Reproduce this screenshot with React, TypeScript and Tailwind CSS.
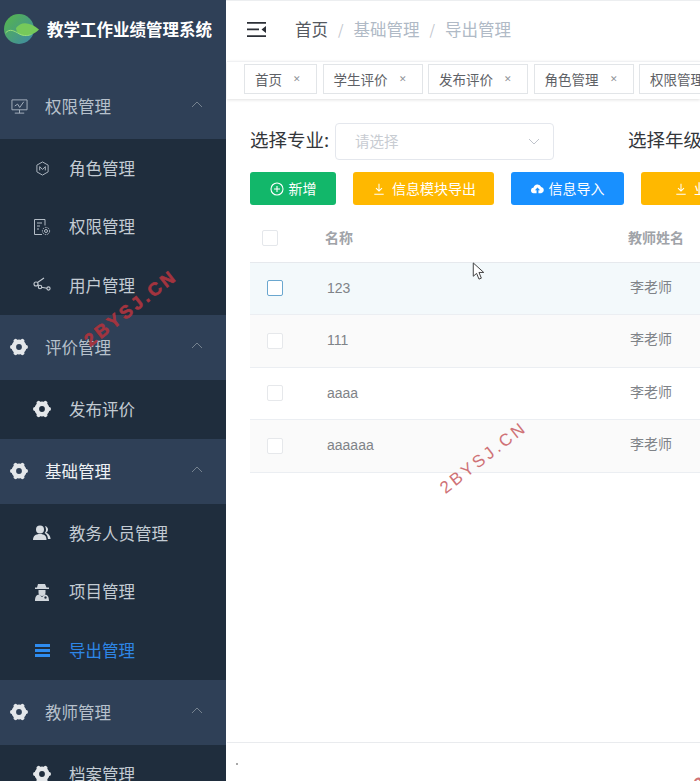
import React from "react";

const font = { fontFamily: '"Noto Sans CJK SC", "Liberation Sans", sans-serif' };

function Gear({ className = "" }: { className?: string }) {
  return (
    <svg viewBox="0 0 20 20" className={className} fill="none" stroke="#e4e7ea" aria-hidden="true">
      <circle cx="10" cy="10" r="5.200" strokeWidth="4.600" />
      <path
        strokeWidth="3.800"
        strokeLinecap="round"
        d="M15.500 10h1.600M12.750 14.800l.8 1.400M7.250 14.800l-.8 1.400M4.500 10H2.900M7.250 5.200l-.8-1.400M12.750 5.200l.8-1.400"
      />
    </svg>
  );
}

function Monitor() {
  return (
    <svg viewBox="0 0 18 18" className="w-[17px] h-[17px]" fill="none" stroke="#a9b4c0" strokeWidth="1">
      <path d="M1 2h16v10.500H1zM9 12.500V16M4 16h10" />
      <path d="M4 8.500l3-2 2.200 3.500L13.500 4" />
    </svg>
  );
}

function HexM() {
  return (
    <svg viewBox="0 0 16 16" className="w-[15px] h-[15px]" fill="none" stroke="#b3bcc6" strokeWidth="1">
      <path d="M8 1l6 3.400v7.200L8 15l-6-3.400V4.400z" />
      <path d="M5 10V6l3 3 3-3v4" />
    </svg>
  );
}

function DocGear() {
  return (
    <svg viewBox="0 0 18 18" className="w-[18px] h-[18px]" fill="none" stroke="#b3bcc6" strokeWidth="1">
      <path d="M9 16.500H1.500v-15h10.500v6" />
      <path d="M4 5h5M4 8h3M4 11h2" />
      <circle cx="13" cy="13" r="1.500" />
      <circle cx="13" cy="13" r="3.600" strokeDasharray="1.600 1" />
    </svg>
  );
}

function Share() {
  return (
    <svg viewBox="0 0 18 18" className="w-[18px] h-[18px]" fill="none" stroke="#c2c9d1" strokeWidth="1.100">
      <circle cx="3" cy="8" r="2" />
      <circle cx="7" cy="11" r="1.700" />
      <circle cx="15.500" cy="12.500" r="1.600" />
      <path d="M4.500 6.500L11 2M8.500 11.300l5.500 1M5 8.500l.8 1.200" />
    </svg>
  );
}

function Users() {
  return (
    <svg viewBox="0 0 18 16" className="w-[18px] h-[16px]" fill="#d8dde2">
      <circle cx="7" cy="4.500" r="4" />
      <path d="M0 15c0-4 2.500-6 7-6s6.500 2 6.500 6z" />
      <path d="M12 1c2 .6 3 2 3 3.600 0 1.400-.8 2.600-2 3.200 2.600.8 4.400 2.800 4.600 6.200H15c-.2-3-1.400-5-3.400-6 1-1 1.400-2 1.400-3.300 0-1.500-.4-2.700-1-3.700z" />
    </svg>
  );
}

function Detective() {
  return (
    <svg viewBox="0 0 14 18" className="w-[14px] h-[18px]" fill="#d0d6dc">
      <path d="M3 1h7l1.500 3.500H14V6H0V4.500h2z" />
      <path d="M3.500 7h7v2.500a3.500 3.500 0 0 1-7 0z" />
      <path d="M0 18c0-4.500 1.500-6 4-6.500L7 14l3-2.500c2.500.5 4 2 4 6.500z" />
      <circle cx="10.500" cy="14.500" r="1.500" fill="#1f2d3d" stroke="#d0d6dc" strokeWidth=".7" />
    </svg>
  );
}

function Bars() {
  return (
    <svg viewBox="0 0 15 13" className="w-[15px] h-[13px]" fill="#2e8cf0">
      <path d="M0 0h15v3H0zM0 5h15v3H0zM0 10h15v3H0z" />
    </svg>
  );
}

function Chevron() {
  return (
    <svg viewBox="0 0 12 7" className="w-[12px] h-[7px]" fill="none" stroke="#75828f" strokeWidth="1">
      <path d="M1 6l5-5 5 5" />
    </svg>
  );
}

function Parent({ icon, label, active }: { icon: React.ReactNode; label: string; active?: boolean }) {
  return (
    <div className="h-[65.500px] shrink-0 bg-[#2f4057] flex items-center pl-[10px] pr-[23px]">
      <div className="w-[18px] flex justify-center">{icon}</div>
      <span className={`ml-[17px] text-[16.500px] ${active ? "text-[#eef1f4]" : "text-[#b7c1cc]"}`}>{label}</span>
      <div className="ml-auto -mt-[3px]">
        <Chevron />
      </div>
    </div>
  );
}

function Sub({ icon, label, active }: { icon: React.ReactNode; label: string; active?: boolean }) {
  return (
    <div className="h-[58.500px] shrink-0 bg-[#1f2d3d] flex items-center pl-[33px]">
      <div className="w-[18px] flex justify-center">{icon}</div>
      <span className={`ml-[18px] text-[16.500px] ${active ? "text-[#2e86e6]" : "text-[#c3cbd3]"}`}>{label}</span>
    </div>
  );
}

function Logo() {
  return (
    <svg viewBox="0 0 36 32" className="w-[36px] h-[32px]" aria-hidden="true">
      <defs>
        <linearGradient id="lg" x1="0" y1="0" x2="1" y2="1">
          <stop offset="0" stopColor="#56b848" />
          <stop offset="1" stopColor="#3e88a8" />
        </linearGradient>
      </defs>
      <circle cx="15" cy="16" r="15" fill="url(#lg)" />
      <path d="M12 15c5-7 14-6 23 1.500C29 23 19 24 15 21c-2-1.500-3-4-3-6z" fill="#76c95a" />
      <path d="M1.500 20c4-5 9-2 14 1 5 2.500 9 1.500 12 .5" fill="none" stroke="#9adf7a" strokeWidth="1" />
    </svg>
  );
}

function Tag({ label, w }: { label: string; w: string }) {
  return (
    <div className={`${w} h-[30px] shrink-0 border border-[#e2e5e8] bg-white flex items-center pl-[10px] text-[13.500px] text-[#5e6166]`}>
      <span>{label}</span>
      <span className="ml-[11px] text-[9px] text-[#8f9398]">✕</span>
    </div>
  );
}

function Btn({ color, w, icon, label }: { color: string; w: string; icon: React.ReactNode; label: string }) {
  return (
    <div className={`${color} ${w} h-[33px] shrink-0 rounded-[3px] flex items-center justify-center gap-[5px] text-white text-[14px]`}>
      {icon}
      <span>{label}</span>
    </div>
  );
}

function Download() {
  return (
    <svg viewBox="0 0 14 14" className="w-[12px] h-[12px] mx-[2px]" fill="none" stroke="#fff" strokeWidth="1.200">
      <path d="M7 1v8M3.500 6L7 9.500 10.500 6M1.500 13h11" />
    </svg>
  );
}

function Plus() {
  return (
    <svg viewBox="0 0 14 14" className="w-[14px] h-[14px]" fill="none" stroke="#fff" strokeWidth="1.100">
      <circle cx="7" cy="7" r="6" />
      <path d="M7 4v6M4 7h6" />
    </svg>
  );
}

function Cloud() {
  return (
    <svg viewBox="0 0 14 11" className="w-[13px] h-[11px]" fill="#fff">
      <path d="M3.200 10.500a3 3 0 0 1-.4-6A4.300 4.300 0 0 1 11 3.800a3.400 3.400 0 0 1 0 6.700H8V7.500h1.800L7 4.500l-2.800 3H6v3z" />
    </svg>
  );
}

function Row({ name, bg, active, h }: { name: string; bg: string; active?: boolean; h: string }) {
  return (
    <div className={`${bg} ${h} flex items-center border-b border-[#ebeef2] text-[14px] text-[#7f8388]`}>
      <div className={`ml-[17px] w-[16px] h-[16px] rounded-[2px] bg-white border ${active ? "border-[#6aa7cf]" : "border-[#e6e8eb]"}`} />
      <div className="ml-[44px] w-[303px] [font-family:'Liberation_Sans',sans-serif]">{name}</div>
      <div className="-mt-[4px]">李老师</div>
    </div>
  );
}

function Mark({ className }: { className: string }) {
  return (
    <div className={`absolute whitespace-nowrap font-bold text-[17px] tracking-[3px] -rotate-[38deg] pointer-events-none [font-family:'Liberation_Sans',sans-serif] ${className}`}>
      2BYSJ.CN
    </div>
  );
}

export default function App() {
  return (
    <div className="relative w-[700px] h-[781px] overflow-hidden flex bg-white" style={font}>
      <aside className="w-[226px] shrink-0 flex flex-col overflow-hidden bg-[#2f4057]">
        <div className="h-[73.500px] shrink-0 flex items-start pt-[13px] pl-[4px]">
          <Logo />
          <span className="ml-[7px] mt-[5px] text-[16.500px] font-bold text-white whitespace-nowrap leading-[22px]">教学工作业绩管理系统</span>
        </div>
        <Parent icon={<Monitor />} label="权限管理" />
        <Sub icon={<HexM />} label="角色管理" />
        <Sub icon={<DocGear />} label="权限管理" />
        <Sub icon={<Share />} label="用户管理" />
        <Parent icon={<Gear className="w-[20px] h-[20px] shrink-0" />} label="评价管理" />
        <Sub icon={<Gear className="w-[20px] h-[20px] shrink-0" />} label="发布评价" />
        <Parent icon={<Gear className="w-[20px] h-[20px] shrink-0" />} label="基础管理" active />
        <Sub icon={<Users />} label="教务人员管理" />
        <Sub icon={<Detective />} label="项目管理" />
        <Sub icon={<Bars />} label="导出管理" active />
        <Parent icon={<Gear className="w-[20px] h-[20px] shrink-0" />} label="教师管理" />
        <Sub icon={<Gear className="w-[20px] h-[20px] shrink-0" />} label="档案管理" />
      </aside>

      <main className="flex-1 min-w-0 flex flex-col overflow-hidden border-t border-[#eceef0] pl-px">
        <div className="h-[60px] shrink-0 flex items-center pb-[4px]">
          <svg viewBox="0 0 19 15" className="ml-[20px] w-[19px] h-[15px]" fill="#2b2f36">
            <path d="M0 0h19v1.700H0zM0 6.500h12v1.700H0zM0 13.200h19v1.700H0zM19 4v7l-4.500-3.500z" />
          </svg>
          <div className="ml-[29px] flex items-center text-[16.500px] whitespace-nowrap">
            <span className="text-[#55595f]">首页</span>
            <span className="mx-[10px] text-[#c0c4cc] text-[14px]">/</span>
            <span className="text-[#b0bac6]">基础管理</span>
            <span className="mx-[10px] text-[#c0c4cc] text-[14px]">/</span>
            <span className="text-[#b0bac6]">导出管理</span>
          </div>
        </div>

        <div className="h-[38px] shrink-0 border-t border-[#f0f1f3] shadow-[0_1px_3px_rgba(0,0,0,0.12)] flex items-center pl-[17px] pb-[3px] gap-[5.500px] whitespace-nowrap">
          <Tag label="首页" w="w-[73px]" />
          <Tag label="学生评价" w="w-[100px]" />
          <Tag label="发布评价" w="w-[100px]" />
          <Tag label="角色管理" w="w-[100px]" />
          <Tag label="权限管理" w="w-[100px]" />
        </div>

        <div className="flex-1 min-h-0 pl-[23px] pt-[24px] w-[640px]">
          <div className="flex items-center h-[37px] text-[18.500px] text-[#33363a] whitespace-nowrap">
            <span className="w-[85px] -mt-[3px]">选择专业:</span>
            <div className="w-[219px] h-[37px] shrink-0 rounded-[4px] border border-[#e4e7ed] flex items-center pl-[19px] pr-[13px] text-[14.500px] text-[#c8ccd2]">
              <span className="-mt-[1px]">请选择</span>
              <svg viewBox="0 0 12 7" className="ml-auto w-[12px] h-[7px]" fill="none" stroke="#c0c4cc" strokeWidth="1">
                <path d="M1 1l5 5 5-5" />
              </svg>
            </div>
            <span className="ml-[74px] -mt-[3px]">选择年级</span>
          </div>

          <div className="mt-[12px] flex gap-[17px] whitespace-nowrap">
            <Btn color="bg-[#12b76a]" w="w-[86px]" icon={<Plus />} label="新增" />
            <Btn color="bg-[#ffb800]" w="w-[141px]" icon={<Download />} label="信息模块导出" />
            <Btn color="bg-[#1890ff]" w="w-[113px]" icon={<Cloud />} label="信息导入" />
            <Btn color="bg-[#ffb800]" w="w-[141px]" icon={<Download />} label="业绩导出" />
          </div>

          <div className="mt-[10px]">
            <div className="h-[47.500px] flex items-center border-b border-[#e6e9ed] text-[14px] font-bold text-[#a0a3a8]">
              <div className="ml-[12px] w-[16px] h-[16px] rounded-[2px] border border-[#e4e7eb] bg-white" />
              <div className="ml-[47px] w-[303px] -mt-[1px]">名称</div>
              <div className="-mt-[1px]">教师姓名</div>
            </div>
            <Row name="123" bg="bg-[#f3f9fb]" h="h-[52.500px]" active />
            <Row name="111" bg="bg-[#fafafa]" h="h-[52.500px]" />
            <Row name="aaaa" bg="bg-white" h="h-[52.500px]" />
            <Row name="aaaaaa" bg="bg-[#fafafa]" h="h-[52.500px]" />
          </div>
        </div>

        <div className="h-[39px] shrink-0 border-t border-[#e9ebee] relative">
          <div className="absolute left-[9px] top-[20px] w-[2px] h-[2px] bg-[#a8a8a8]" />
        </div>
      </main>

      <svg viewBox="0 0 13 20" className="absolute left-[472px] top-[262px] w-[13px] h-[19px]" fill="#fff" stroke="#3a3a3a" strokeWidth="1">
        <path d="M1 1v14l3.500-3 2.500 6 2.500-1-2.500-6H12z" />
      </svg>

      <Mark className="left-[75px] top-[295px] text-[#a3343f] text-[18px] [-webkit-text-stroke:0.6px_#a3343f]" />
      <Mark className="left-[431px] top-[445px] text-[#cf7276] font-normal" />
      <Mark className="left-[685px] top-[741px] text-[#cf7276]" />
    </div>
  );
}
